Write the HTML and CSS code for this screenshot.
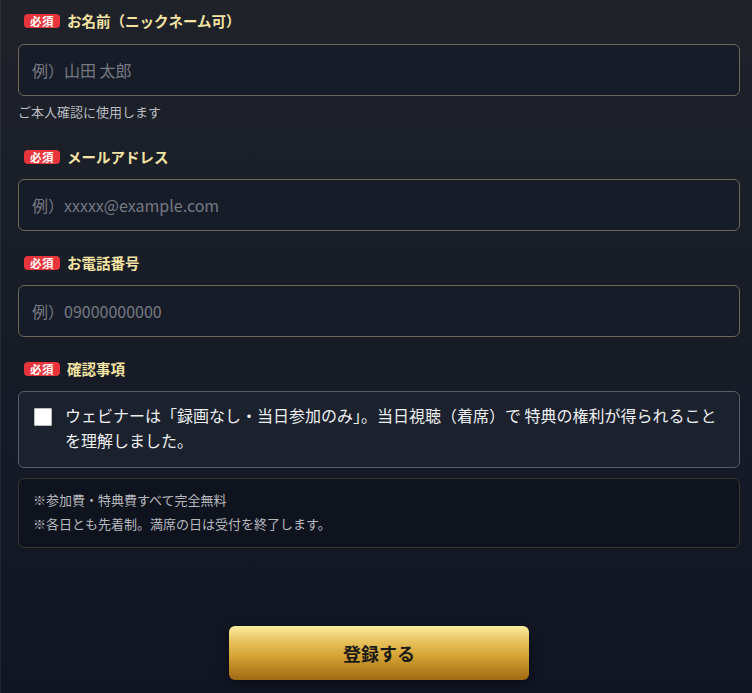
FILE: index.html
```html
<!DOCTYPE html>
<html lang="ja">
<head>
<meta charset="utf-8">
<title>登録フォーム</title>
<link rel="stylesheet" href="styles.css">
</head>
<body>
<form class="form">
  <div class="field">
    <div class="label-row"><span class="badge">必須</span><span class="label">お名前（ニックネーム可）</span></div>
    <input class="input" type="text" placeholder="例）山田 太郎">
    <p class="help">ご本人確認に使用します</p>
  </div>
  <div class="field">
    <div class="label-row"><span class="badge">必須</span><span class="label">メールアドレス</span></div>
    <input class="input" type="email" placeholder="例）xxxxx@example.com">
  </div>
  <div class="field">
    <div class="label-row"><span class="badge">必須</span><span class="label">お電話番号</span></div>
    <input class="input" type="tel" placeholder="例）09000000000">
  </div>
  <div class="field field-last">
    <div class="label-row"><span class="badge">必須</span><span class="label">確認事項</span></div>
    <label class="agree">
      <span class="check"></span>
      <span class="agree-text">ウェビナーは「録画なし・当日参加のみ」。当日視聴（着席）で 特典の権利が得られることを理解しました。</span>
    </label>
    <div class="notes">
      <p>※参加費・特典費すべて完全無料</p>
      <p>※各日とも先着制。満席の日は受付を終了します。</p>
    </div>
  </div>
  <div class="actions">
    <button class="submit" type="button">登録する</button>
  </div>
</form>
</body>
</html>
```
FILE: styles.css
```css
html, body {
  margin: 0;
  padding: 0;
  height: 100%;
}
body {
  background: linear-gradient(180deg, #1f2229 0%, #171c27 45%, #111624 100%);
  font-family: "Noto Sans CJK JP", "Noto Sans", sans-serif;
  color: #e8e8ea;
  box-shadow: inset 1px 0 0 rgba(255,255,255,0.06);
}
.form {
  padding: 10px 12px 0 18px;
}
.field {
  margin-bottom: 21px;
}
.field-last {
  margin-bottom: 0;
}
.label-row {
  height: 22px;
  display: flex;
  align-items: center;
  gap: 7px;
  padding-left: 6px;
  margin-bottom: 12px;
}
.field + .field .label-row {
  margin-bottom: 11px;
}
.badge {
  background: #e8353b;
  color: #fff;
  font-size: 11.5px;
  font-weight: 700;
  line-height: 14px;
  height: 14px;
  width: 36px;
  text-align: center;
  border-radius: 4px;
  letter-spacing: 0.5px;
}
.label {
  color: #f4e4a4;
  font-size: 14.5px;
  font-weight: 700;
  line-height: 22px;
}
.input {
  display: block;
  box-sizing: border-box;
  width: 100%;
  height: 52px;
  margin: 0;
  padding: 0 13px;
  border: 1px solid #6c6858;
  border-radius: 6px;
  background: #171c29;
  color: #eee;
  font-family: "Noto Sans CJK JP", "Noto Sans", sans-serif;
  font-size: 16px;
  outline: none;
}
.input::placeholder {
  color: #767982;
}
.help {
  margin: 8px 0 0;
  padding-bottom: 5px;
  font-size: 13px;
  line-height: 16px;
  color: #b9bbc0;
}
.agree {
  display: flex;
  align-items: flex-start;
  gap: 13px;
  box-sizing: border-box;
  border: 1px solid #585c64;
  border-radius: 6px;
  background: #1c212e;
  padding: 11px 14px 14px 15px;
}
.check {
  flex: none;
  width: 18px;
  height: 18px;
  margin-top: 5px;
  background: #fff;
  border-radius: 2px;
  box-shadow: inset 0 0 0 1px #bbb;
}
.agree-text {
  font-size: 16px;
  line-height: 25px;
  color: #eef0f2;
}
.notes {
  margin-top: 10px;
  border: 1px solid #39342a;
  border-radius: 6px;
  background: #0f131d;
  padding: 9px 14px 11px;
}
.notes p {
  margin: 0;
  font-size: 13px;
  line-height: 24px;
  color: #b8bac0;
}
.actions {
  display: flex;
  justify-content: center;
  padding: 78px 0 0;
}
.submit {
  width: 300px;
  height: 54px;
  border: none;
  border-radius: 6px;
  background: linear-gradient(180deg, #fcec9f 0%, #e6c05a 30%, #d6a434 55%, #b98423 80%, #9f6913 100%);
  box-shadow: 0 4px 14px rgba(0,0,0,0.45);
  color: #1b1a17;
  font-family: "Noto Sans CJK JP", "Noto Sans", sans-serif;
  font-size: 18px;
  font-weight: 700;
  cursor: pointer;
}
```
